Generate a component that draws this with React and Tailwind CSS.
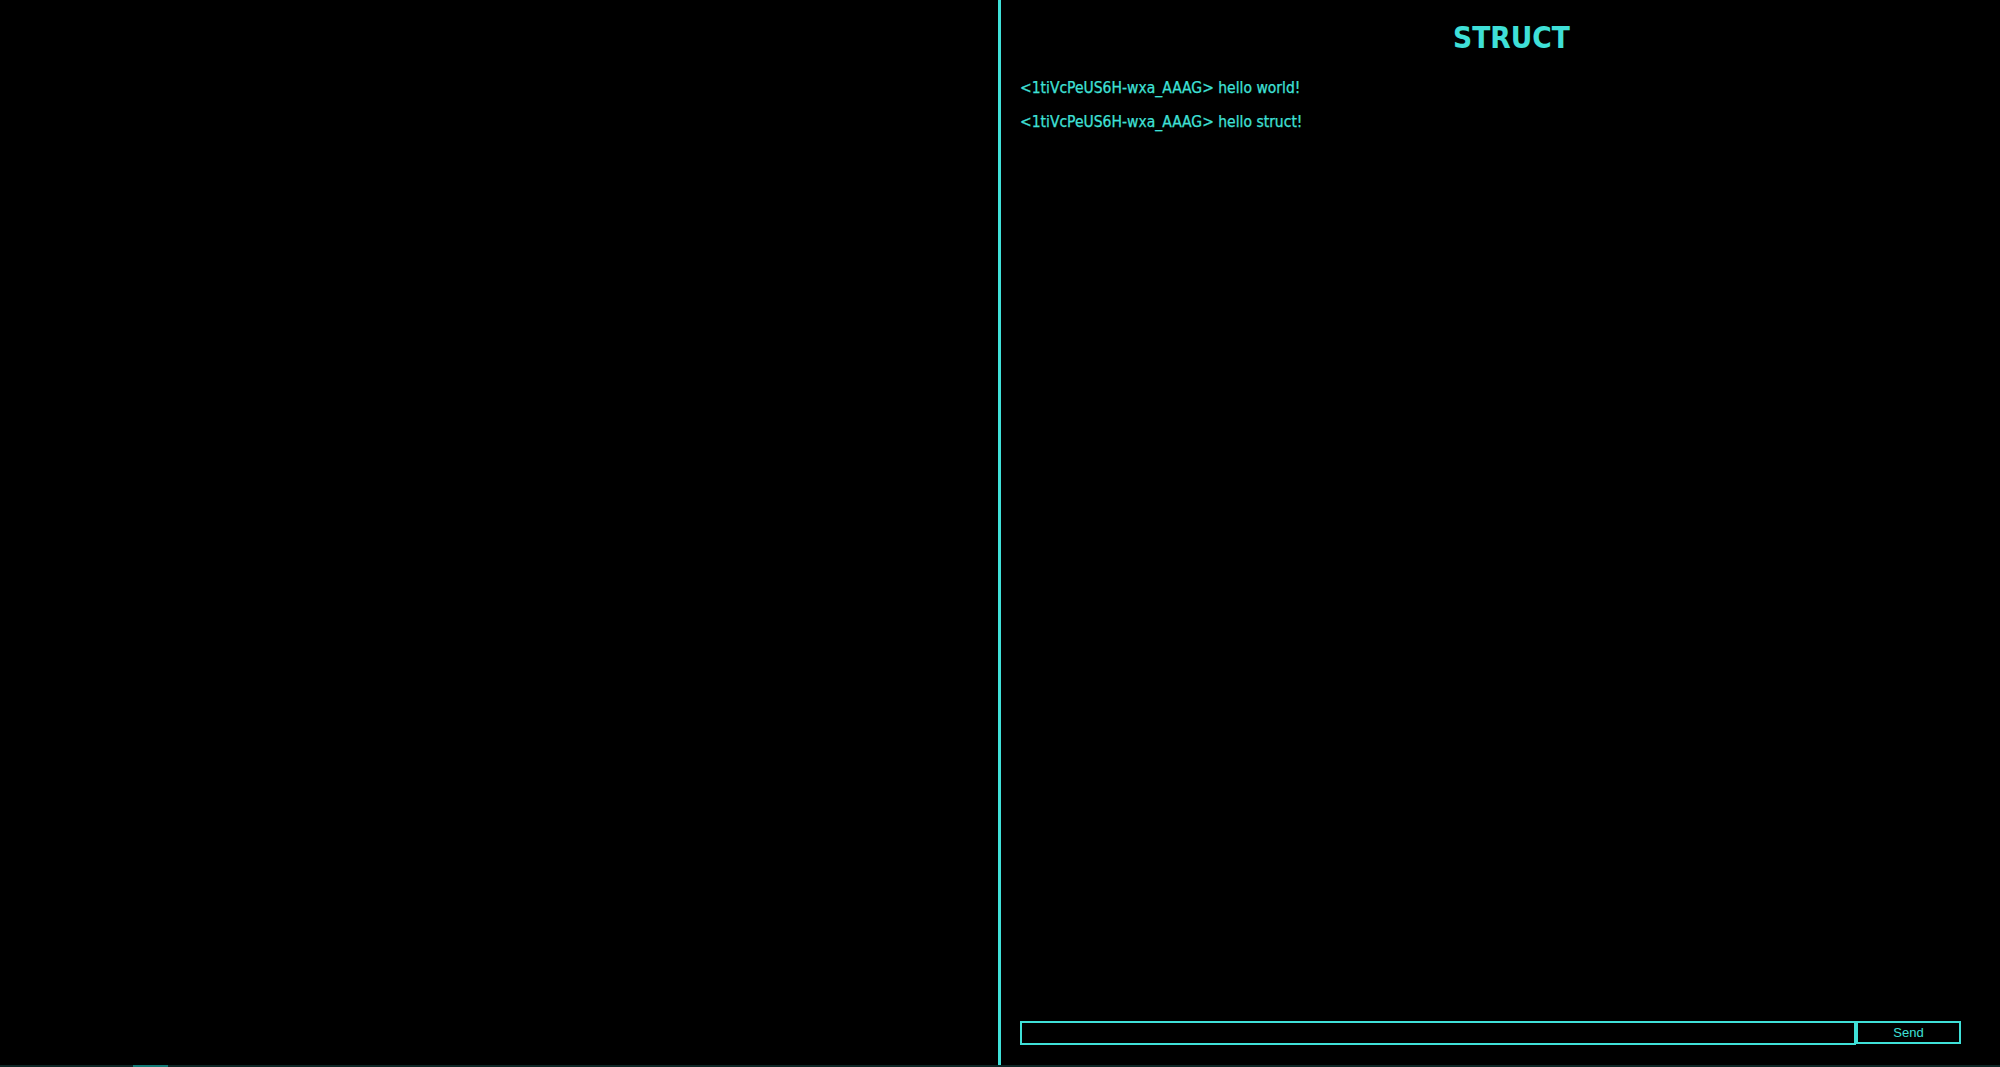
import React from "react";

export default function App() {
  const msgs = [
    "<1tiVcPeUS6H-wxa_AAAG> hello world!",
    "<1tiVcPeUS6H-wxa_AAAG> hello struct!",
  ];
  return (
    <div className="relative flex h-[1067px] w-[2000px] overflow-hidden bg-black">
      <div className="w-[998px] shrink-0" />
      <div className="flex min-w-0 flex-1 flex-col border-l-[3px] border-[#3fe0d8] [font-family:'DejaVu_Sans_Condensed','DejaVu_Sans',sans-serif]">
        <h1 className="mt-[21px] pl-[22px] text-center text-[29.5px] font-bold leading-[34px] text-[#3fe0d8]">
          STRUCT
        </h1>
        <div className="mt-[24px] flex flex-1 flex-col gap-[16px] pl-[19px] text-[15.5px] leading-[18px] text-[#3fe0d8] [-webkit-text-stroke:0.25px_#3fe0d8]">
          {msgs.map((m, i) => (
            <div key={i}>{m}</div>
          ))}
        </div>
        <form
          className="mb-[22px] ml-[19px] flex h-[24px] w-[941px]"
          onSubmit={(e) => e.preventDefault()}
        >
          <input
            type="text"
            className="h-full w-[836px] border-2 border-[#3fe0d8] bg-black px-1 text-[13px] text-[#3fe0d8] outline-none"
          />
          <button
            type="submit"
            className="h-[23px] w-[105px] border-2 border-[#3fe0d8] bg-black text-[13px] text-[#3fe0d8] [font-family:'Liberation_Sans',Arial,sans-serif]"
          >
            Send
          </button>
        </form>
      </div>
      <div className="absolute bottom-0 left-0 h-[2px] w-full bg-[#0e2626]" />
      <div className="absolute bottom-0 left-[133px] h-[2px] w-[35px] bg-[#127a76]" />
    </div>
  );
}
